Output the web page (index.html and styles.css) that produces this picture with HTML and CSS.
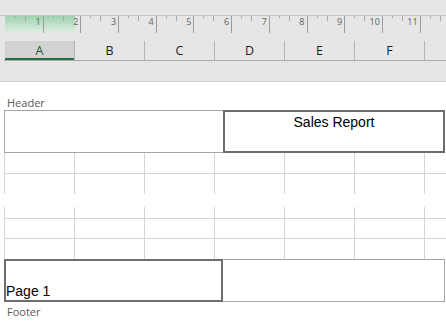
FILE: index.html
```html
<!DOCTYPE html>
<html lang="en">

<head>
  <meta charset="UTF-8" />
  <meta name="viewport" content="width=device-width, initial-scale=1" />
  <title>Page Layout - Sales Report</title>
  <link rel="stylesheet" href="styles.css">
</head>

<body>
  <div class="chrome">
    <div class="titlebar"></div>
    <div class="ruler">
      <span>1</span><span>2</span><span>3</span><span>4</span><span>5</span><span>6</span>
      <span>7</span><span>8</span><span>9</span><span>10</span><span>11</span><span></span>
    </div>
    <div class="colheads">
      <div class="colhead active">A</div>
      <div class="colhead">B</div>
      <div class="colhead">C</div>
      <div class="colhead">D</div>
      <div class="colhead">E</div>
      <div class="colhead">F</div>
      <div class="colhead"></div>
    </div>
    <div class="band"></div>
  </div>

  <main class="page">
    <p class="hf-label">Header</p>
    <div class="hf-box">
      <div class="hf-cell left"></div>
      <div class="hf-cell right selected title">Sales Report</div>
    </div>

    <div class="grid">
      <div class="grid-row"><span></span><span></span><span></span><span></span><span></span><span></span><span></span></div>
      <div class="grid-row open"><span></span><span></span><span></span><span></span><span></span><span></span><span></span></div>
    </div>

    <div class="grid second">
      <div class="grid-row short"><span></span><span></span><span></span><span></span><span></span><span></span><span></span></div>
      <div class="grid-row mid"><span></span><span></span><span></span><span></span><span></span><span></span><span></span></div>
      <div class="grid-row open"><span></span><span></span><span></span><span></span><span></span><span></span><span></span></div>
    </div>

    <div class="hf-box">
      <div class="hf-cell left selected page-num">Page 1</div>
      <div class="hf-cell right"></div>
    </div>
    <p class="hf-label footer-label">Footer</p>
  </main>
</body>

</html>
```

FILE: styles.css
```css
* {
  box-sizing: border-box;
}

body {
  margin: 0;
  background-color: #fff;
  font-family: "Open Sans", "Noto Sans", sans-serif;
  overflow: hidden;
}

/* excel chrome */
.chrome {
  background-color: #e6e6e6;
  border-bottom: 1px solid #d2d2d2;
}

.titlebar {
  height: 16px;
  border-bottom: 1px solid #c6c6c6;
}

.ruler {
  display: flex;
  height: 17px;
  padding-left: 6px;
  overflow: hidden;
  background: linear-gradient(#9ed2af, #e2eee6) 5px 0 / 70px 100% no-repeat;
}

.ruler span {
  flex: 0 0 37.7px;
  border-right: 1px solid #9c9c9c;
  padding-right: 2px;
  text-align: right;
  font-family: "Noto Sans", sans-serif;
  font-size: 9px;
  line-height: 12px;
  color: #6a6a6a;
  background:
    linear-gradient(#a8a8a8, #a8a8a8) 9px 0 / 1px 2px no-repeat,
    linear-gradient(#a8a8a8, #a8a8a8) 19px 0 / 1px 5px no-repeat;
}

.colheads {
  display: flex;
  height: 20px;
  margin: 8px 0 0 4px;
  padding-left: 1px;
  border-bottom: 1px solid #ababab;
  overflow: hidden;
}

.colhead {
  flex: 0 0 70px;
  border-right: 1px solid #b4b4b4;
  text-align: center;
  font-size: 12.5px;
  line-height: 19px;
  color: #1e1e1e;
}

.colhead.active {
  background-color: #d2d2d2;
  color: #1f5a38;
  box-shadow: inset 0 -2px #217346;
}

.band {
  height: 20px;
}

/* page layout area */
.page {
  padding-top: 13px;
}

.hf-label {
  margin: 0 0 0 7px;
  font-size: 11px;
  line-height: 15px;
  color: #595959;
}

.footer-label {
  margin-top: 2px;
}

.hf-box {
  display: flex;
  width: 441px;
  height: 43px;
  margin-left: 4px;
}

.hf-cell {
  border: 1px solid #a6a6a6;
  font-family: "Liberation Sans", Arial, sans-serif;
  font-size: 14px;
  line-height: 16px;
  color: #000;
}

.hf-cell.left {
  flex: 0 0 219px;
}

.hf-cell.right {
  flex: 1;
}

.hf-box .left:not(.selected) {
  border-right: none;
}

.hf-box .right:not(.selected) {
  border-left: none;
}

.hf-cell.selected {
  border: 2px solid #6d6d6d;
}

.title {
  padding-top: 2px;
  text-align: center;
}

.page-num {
  display: flex;
  align-items: flex-end;
  padding-bottom: 1px;
}

/* worksheet cells */
.grid-row {
  display: flex;
  height: 21px;
  margin-left: 4px;
  border-bottom: 1px solid #d4d4d4;
}

.grid-row span {
  flex: 0 0 70px;
  border-left: 1px solid #d4d4d4;
}

.grid-row span:last-child {
  flex: 1;
}

.grid-row.open {
  height: 20px;
  border-bottom: none;
}

.grid-row.short {
  height: 12px;
}

.grid-row.mid {
  height: 20px;
}

.grid.second {
  margin-top: 13px;
}
```
